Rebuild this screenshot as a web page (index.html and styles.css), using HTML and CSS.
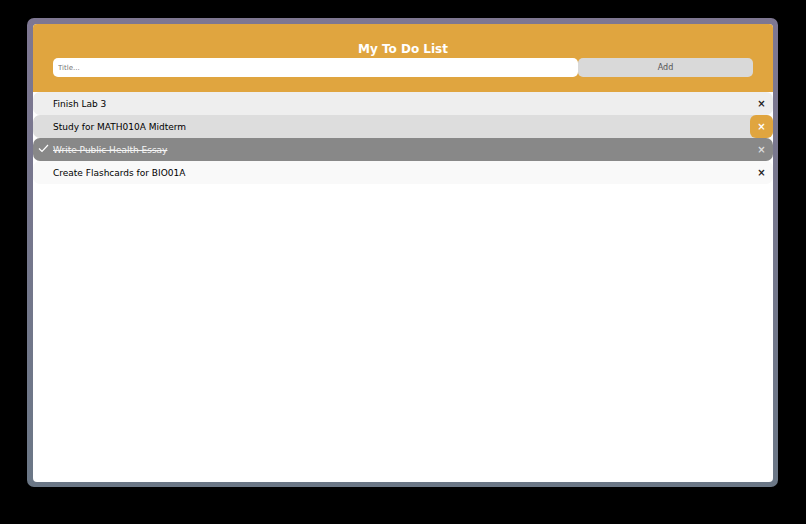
FILE: index.html
```html
<!DOCTYPE html>
<html lang="en">
<head>
<meta charset="utf-8">
<title>My To Do List</title>
<link rel="stylesheet" href="styles.css">
</head>
<body>
<div class="frame">
  <div class="app">
    <div class="header">
      <h2 class="title">My To Do List</h2>
      <div class="form">
        <input class="title-input" type="text" placeholder="Title...">
        <span class="add-btn">Add</span>
      </div>
    </div>
    <ul class="list">
      <li class="item item-a"><span class="text">Finish Lab 3</span><span class="close">&times;</span></li>
      <li class="item item-hover"><span class="text">Study for MATH010A Midterm</span><span class="close close-hover">&times;</span></li>
      <li class="item item-checked"><svg class="check" width="11" height="9" viewBox="0 0 11 9"><polyline points="1,4.5 4,7.5 10,1" fill="none" stroke="#fff" stroke-width="1.2"/></svg><span class="text">Write Public Health Essay</span><span class="close close-checked">&times;</span></li>
      <li class="item item-b"><span class="text">Create Flashcards for BIO01A</span><span class="close">&times;</span></li>
    </ul>
  </div>
</div>
</body>
</html>
```

FILE: styles.css
```css
html, body {
  margin: 0;
  padding: 0;
  background: #000;
}
body {
  padding: 18px 0 0 27px;
  font-family: "DejaVu Sans", Verdana, sans-serif;
}
.frame {
  width: 751px;
  height: 469px;
  box-sizing: border-box;
  padding: 6px 5px 5px 6px;
  border-radius: 7px;
  background: linear-gradient(to bottom, #7e7792, #6b7786);
}
.app {
  width: 740px;
  height: 458px;
  background: #fff;
  border-radius: 4px;
  overflow: hidden;
}
.header {
  height: 68px;
  box-sizing: border-box;
  background: #e0a53f;
  padding: 17px 20px 0;
  text-align: center;
}
.title {
  margin: 0;
  font-size: 12px;
  line-height: 17px;
  font-weight: bold;
  color: #fff;
}
.form {
  display: flex;
  height: 19px;
}
.title-input {
  width: 525px;
  height: 19px;
  box-sizing: border-box;
  border: none;
  border-radius: 5px;
  padding: 0 5px;
  margin: 0;
  font-family: inherit;
  font-size: 7px;
  color: #333;
  background: #fff;
  outline: none;
}
.title-input::placeholder {
  color: #777;
}
.add-btn {
  width: 175px;
  height: 19px;
  line-height: 20px;
  border-radius: 5px;
  background: #d9d9d9;
  color: #555;
  font-size: 8px;
  text-align: center;
}
.list {
  margin: 0;
  padding: 0;
  list-style: none;
}
.item {
  position: relative;
  display: flex;
  align-items: center;
  height: 23px;
  padding-left: 20px;
  border-radius: 7px;
  font-size: 9px;
  color: #000;
}
.item-a { background: #eeeeee; }
.item-hover { background: #dddddd; }
.item-checked {
  background: #888888;
  color: #f4f4f4;
}
.item-checked .text { text-decoration: line-through; }
.item-b { background: #f9f9f9; }
.check {
  position: absolute;
  left: 5px;
  top: 6px;
}
.close {
  position: absolute;
  right: 0;
  top: 0;
  width: 23px;
  height: 23px;
  line-height: 23px;
  text-align: center;
  font-size: 10px;
  font-weight: bold;
  color: #222;
}
.close-hover {
  background: #e0a53f;
  color: #fff;
  border-radius: 6px;
}
.close-checked {
  color: #ddd;
}
```
